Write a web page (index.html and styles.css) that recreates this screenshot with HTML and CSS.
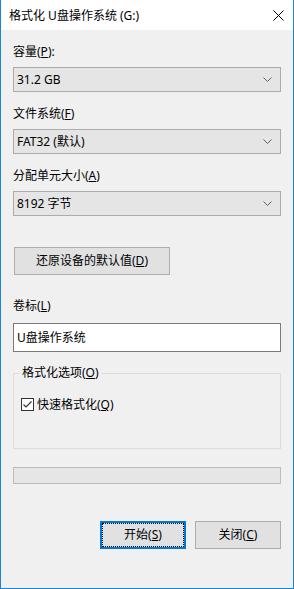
FILE: index.html
```html
<!DOCTYPE html>
<html lang="zh-CN">
<head>
<meta charset="utf-8">
<title>格式化 U盘操作系统 (G:)</title>
<link rel="stylesheet" href="styles.css">
</head>
<body>
<div class="window">
  <div class="titlebar">
    <span class="title">格式化 U盘操作系统 (G:)</span>
    <svg class="close" width="11" height="11" viewBox="0 0 11 11"><path d="M0.5 0.5 L10.5 10.5 M10.5 0.5 L0.5 10.5" stroke="#000" stroke-width="1" fill="none"/></svg>
  </div>
  <div class="content">
    <div class="label first">容量(<u>P</u>):</div>
    <div class="combo"><span class="value">31.2 GB</span><svg class="chev" width="9" height="5" viewBox="0 0 9 5"><path d="M0.5 0.5 L4.5 4.5 L8.5 0.5" stroke="#606060" stroke-width="1" fill="none"/></svg></div>

    <div class="label">文件系统(<u>F</u>)</div>
    <div class="combo"><span class="value">FAT32 (默认)</span><svg class="chev" width="9" height="5" viewBox="0 0 9 5"><path d="M0.5 0.5 L4.5 4.5 L8.5 0.5" stroke="#606060" stroke-width="1" fill="none"/></svg></div>

    <div class="label">分配单元大小(<u>A</u>)</div>
    <div class="combo"><span class="value">8192 字节</span><svg class="chev" width="9" height="5" viewBox="0 0 9 5"><path d="M0.5 0.5 L4.5 4.5 L8.5 0.5" stroke="#606060" stroke-width="1" fill="none"/></svg></div>

    <div class="btn reset">还原设备的默认值(<u>D</u>)</div>

    <div class="label vol">卷标(<u>L</u>)</div>
    <div class="textbox">U盘操作系统</div>

    <div class="group">
      <span class="legend">格式化选项(<u>O</u>)</span>
      <div class="check-row">
        <svg class="checkbox" width="13" height="13" viewBox="0 0 13 13"><rect x="0.5" y="0.5" width="12" height="12" fill="#fff" stroke="#333"/><path d="M2.5 6.5 L5 9 L10.5 3.5" stroke="#333" stroke-width="1.2" fill="none"/></svg>
        <span class="check-label">快速格式化(<u>Q</u>)</span>
      </div>
    </div>

    <div class="progress"></div>

    <div class="actions">
      <div class="btn primary"><span class="focus">开始(<u>S</u>)</span></div>
      <div class="btn">关闭(<u>C</u>)</div>
    </div>
  </div>
</div>
</body>
</html>
```

FILE: styles.css
```css
html, body {
  margin: 0;
  padding: 0;
  background: #f0f0f0;
}

.window {
  width: 294px;
  height: 589px;
  box-sizing: border-box;
  border: 1px solid #1883d7;
  border-top: none;
  background: #f0f0f0;
  font-family: "Noto Sans", "Noto Sans CJK SC", sans-serif;
  font-size: 12px;
  color: #000;
  overflow: hidden;
}

u {
  text-decoration: underline;
  text-underline-offset: 1px;
}

.titlebar {
  height: 30px;
  background: #fff;
  display: flex;
  align-items: center;
  justify-content: space-between;
  padding: 0 9px 0 8px;
}

.title {
  line-height: 16px;
  padding-top: 1px;
}

.close {
  display: block;
  margin-top: 0;
}

.content {
  padding: 0 12px;
  display: flex;
  flex-direction: column;
}

.label {
  line-height: 16px;
  margin-top: 14px;
  height: 16px;
}

.combo {
  margin-top: 7px;
  height: 25px;
  box-sizing: border-box;
  background: #e5e5e5;
  border: 1px solid #acacac;
  display: flex;
  align-items: center;
  justify-content: space-between;
  padding: 0 8px 0 3px;
}

.value {
  line-height: 16px;
}

.chev {
  display: block;
}

.btn {
  box-sizing: border-box;
  height: 28px;
  background: #e1e1e1;
  border: 1px solid #adadad;
  display: flex;
  align-items: center;
  justify-content: center;
  line-height: 16px;
  width: 86px;
}

.reset {
  margin-top: 31px;
  margin-left: 1px;
  width: 156px;
}

.vol {
  margin-top: 23px;
}

.textbox {
  margin-top: 9px;
  height: 29px;
  box-sizing: border-box;
  background: #fff;
  border: 1px solid #7a7a7a;
  padding: 0 3px;
  display: flex;
  align-items: center;
  line-height: 16px;
}

.group {
  position: relative;
  margin-top: 21px;
  height: 76px;
  box-sizing: border-box;
  border: 1px solid #dcdcdc;
  padding: 22px 0 0 7px;
}

.legend {
  position: absolute;
  top: -9px;
  left: 6px;
  padding: 0 2px;
  background: #f0f0f0;
  line-height: 16px;
}

.check-row {
  display: flex;
  align-items: center;
  gap: 3px;
  height: 16px;
}

.checkbox {
  display: block;
}

.check-label {
  line-height: 16px;
  padding-top: 2px;
}

.progress {
  margin-top: 18px;
  height: 17px;
  box-sizing: border-box;
  background: #e6e6e6;
  border: 1px solid #bcbcbc;
}

.actions {
  margin-top: 37px;
  display: flex;
  justify-content: flex-end;
  gap: 9px;
}

.primary {
  border: 2px solid #0078d7;
  padding: 0;
  align-items: stretch;
  justify-content: stretch;
}

.focus {
  flex: 1;
  display: flex;
  align-items: center;
  justify-content: center;
  outline: 1px dotted #000;
  outline-offset: -1px;
}
```
